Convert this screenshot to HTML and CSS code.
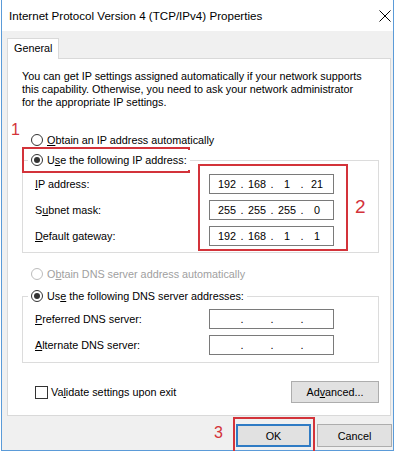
FILE: index.html
```html
<!DOCTYPE html>
<html lang="en">

<head>
  <meta charset="UTF-8">
  <title>Internet Protocol Version 4 (TCP/IPv4) Properties</title>
  <link rel="stylesheet" href="styles.css">
</head>

<body>

  <div class="window">
    <div class="titlebar">
      <span class="title">Internet Protocol Version 4 (TCP/IPv4) Properties</span>
      <svg class="close" width="12" height="12" viewBox="0 0 12 12">
        <path d="M0.5 0.5 L11.5 11.5 M11.5 0.5 L0.5 11.5" stroke="#000" stroke-width="1" fill="none" />
      </svg>
    </div>

    <div class="main">
      <div class="tab">General</div>

      <div class="panel">
        <p class="intro">You can get IP settings assigned automatically if your network supports<br>
          this capability. Otherwise, you need to ask your network administrator<br>
          for the appropriate IP settings.</p>

        <!-- IP -->
        <div class="option first"><span class="radio"></span><span><u>O</u>btain an IP address automatically</span></div>
        <div class="option legend"><span class="radio checked"></span><span>U<u>s</u>e the following IP address:</span></div>
        <div class="group ip-group">
          <div class="field">
            <label><u>I</u>P address:</label>
            <div class="ip"><span class="seg">192</span><span class="dot">.</span><span class="seg">168</span><span class="dot">.</span><span class="seg">1</span><span class="dot">.</span><span class="seg">21</span></div>
          </div>
          <div class="field">
            <label>S<u>u</u>bnet mask:</label>
            <div class="ip"><span class="seg">255</span><span class="dot">.</span><span class="seg">255</span><span class="dot">.</span><span class="seg">255</span><span class="dot">.</span><span class="seg">0</span></div>
          </div>
          <div class="field">
            <label><u>D</u>efault gateway:</label>
            <div class="ip"><span class="seg">192</span><span class="dot">.</span><span class="seg">168</span><span class="dot">.</span><span class="seg">1</span><span class="dot">.</span><span class="seg">1</span></div>
          </div>
        </div>

        <!-- DNS -->
        <div class="option dns-first disabled"><span class="radio"></span><span>O<u>b</u>tain DNS server address automatically</span></div>
        <div class="option legend dns-legend"><span class="radio checked"></span><span>Us<u>e</u> the following DNS server addresses:</span></div>
        <div class="group dns-group">
          <div class="field">
            <label><u>P</u>referred DNS server:</label>
            <div class="ip"><span class="seg"></span><span class="dot">.</span><span class="seg"></span><span class="dot">.</span><span class="seg"></span><span class="dot">.</span><span class="seg"></span></div>
          </div>
          <div class="field">
            <label><u>A</u>lternate DNS server:</label>
            <div class="ip"><span class="seg"></span><span class="dot">.</span><span class="seg"></span><span class="dot">.</span><span class="seg"></span><span class="dot">.</span><span class="seg"></span></div>
          </div>
        </div>

        <div class="bottom-row">
          <div class="check-row"><span class="checkbox"></span><span>Va<u>l</u>idate settings upon exit</span></div>
          <button class="btn advanced">Ad<u>v</u>anced...</button>
        </div>

        <!-- anotaciones -->
        <div class="mark box1"></div>
        <span class="num num1">1</span>
        <div class="mark box2"></div>
        <span class="num num2">2</span>
      </div>

      <div class="buttons">
        <button class="btn default">OK</button>
        <button class="btn">Cancel</button>
      </div>
    </div>

    <div class="mark box3"></div>
    <span class="num num3">3</span>
  </div>

</body>

</html>
```

FILE: styles.css
```css
body {
  margin: 0;
  background: #fff;
  font-family: "Liberation Sans", Arial, sans-serif;
  font-size: 10.8px;
  color: #000;
}

* {
  box-sizing: border-box;
}

.window {
  position: relative;
  margin-left: 1px;
  width: 393px;
  height: 451px;
  border: 1px solid #5b9bd8;
  border-top: 0;
  display: flex;
  flex-direction: column;
}

.titlebar {
  height: 31px;
  background: #fff;
  display: flex;
  align-items: center;
  justify-content: space-between;
  padding-left: 7px;
  padding-right: 2px;
}

.title {
  font-size: 11.6px;
}

.main {
  flex: 1;
  background: #f0f0f0;
  padding: 7px 0 0 5px;
}

.tab {
  position: relative;
  z-index: 1;
  width: 52px;
  height: 21px;
  margin-bottom: -1px;
  border: 1px solid #d9d9d9;
  border-bottom: 0;
  background: #fff;
  padding-left: 6px;
  line-height: 19px;
}

.panel {
  position: relative;
  width: 384px;
  height: 358px;
  border: 1px solid #d9d9d9;
  background: #fff;
}

.intro {
  margin: 11px 0 0 14px;
  line-height: 13px;
  white-space: nowrap;
}

.option {
  height: 20px;
  display: flex;
  align-items: center;
  padding-left: 23px;
  white-space: nowrap;
}

.option.first {
  margin-top: 21px;
}

.option.legend {
  position: relative;
  z-index: 1;
  width: fit-content;
  margin-left: 20px;
  padding: 0 3px;
  background: #fff;
}

.option.dns-first {
  margin-top: 11px;
}

.option.dns-legend {
  margin-top: 2px;
}

.option.disabled {
  color: #a0a0a0;
}

.radio {
  width: 12px;
  height: 12px;
  margin-right: 4px;
  border: 1px solid #333;
  border-radius: 50%;
  display: flex;
  align-items: center;
  justify-content: center;
  background: #fff;
}

.disabled .radio {
  border-color: #bcbcbc;
}

.radio.checked::after {
  content: "";
  width: 6px;
  height: 6px;
  border-radius: 50%;
  background: #333;
}

.group {
  margin: -10px 0 0 14px;
  width: 357px;
  border: 1px solid #dcdcdc;
  padding: 13px 0 0 12px;
  display: flex;
  flex-direction: column;
  gap: 6px;
}

.ip-group {
  height: 93px;
}

.dns-group {
  height: 67px;
  padding-top: 12px;
}

.field {
  height: 20px;
  display: flex;
  align-items: center;
}

.field label {
  width: 174px;
}

.ip {
  width: 125px;
  height: 20px;
  border: 1px solid #7a7a7a;
  padding-left: 4px;
  display: flex;
  align-items: center;
  background: #fff;
}

.ip .seg {
  width: 26px;
  text-align: center;
}

.ip .dot {
  width: 4px;
  text-align: center;
}

.bottom-row {
  margin-top: 18px;
  height: 22px;
  display: flex;
  align-items: center;
  justify-content: space-between;
  padding-left: 27px;
  padding-right: 11px;
}

.check-row {
  display: flex;
  align-items: center;
}

.checkbox {
  width: 13px;
  height: 13px;
  margin-right: 3px;
  border: 1px solid #333;
  background: #fff;
}

.btn {
  font-family: inherit;
  font-size: 10.8px;
  color: #000;
  background: #e1e1e1;
  border: 1px solid #adadad;
  padding: 0;
  height: 23px;
  width: 75px;
}

.btn.advanced {
  width: 88px;
  height: 22px;
}

.btn.default {
  border: 2px solid #2f7bc4;
}

.buttons {
  display: flex;
  justify-content: flex-end;
  gap: 6px;
  margin-top: 8px;
  padding-right: 1px;
}

/* anotaciones rojas */
.mark {
  position: absolute;
  border: 2px solid #d3333a;
}

.num {
  position: absolute;
  color: #d3333a;
  font-size: 16px;
  line-height: 16px;
}

.box1 {
  left: 14px;
  top: 88px;
  width: 168px;
  height: 26px;
}

.num1 {
  left: 3px;
  top: 63px;
}

.box2 {
  left: 190px;
  top: 105px;
  width: 150px;
  height: 87px;
}

.num2 {
  left: 347px;
  top: 138px;
  font-size: 19px;
  line-height: 19px;
}

.box3 {
  left: 231px;
  top: 417px;
  width: 82px;
  height: 37px;
}

.num3 {
  left: 212px;
  top: 425px;
}
```
